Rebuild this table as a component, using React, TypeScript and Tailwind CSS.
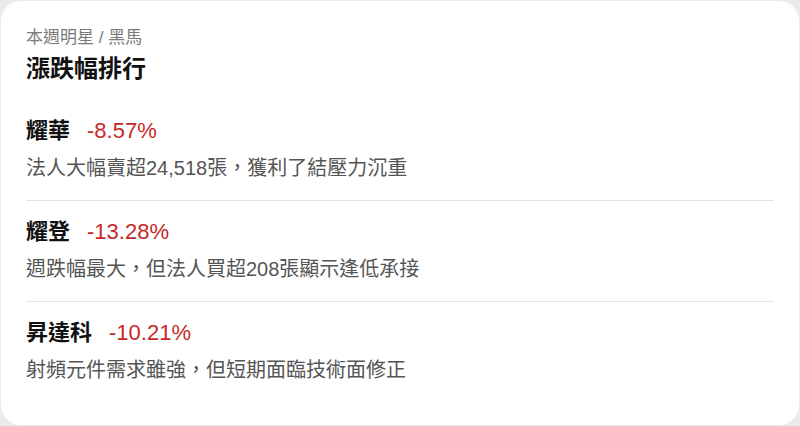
import React from "react";

const items = [
  { name: "耀華", pct: "-8.57%", desc: "法人大幅賣超24,518張，獲利了結壓力沉重" },
  { name: "耀登", pct: "-13.28%", desc: "週跌幅最大，但法人買超208張顯示逢低承接" },
  { name: "昇達科", pct: "-10.21%", desc: "射頻元件需求雖強，但短期面臨技術面修正" },
];

export default function App() {
  return (
    <div
      lang="zh-TW"
      className="w-[800px] h-[426px] bg-[#ebebeb] pt-px pl-px"
      style={{ fontFamily: '"Liberation Sans", "Noto Sans CJK TC", sans-serif' }}
    >
      <div className="w-[798px] h-[424px] bg-white rounded-[20px] px-[25px] pt-[25px] pb-[22px] flex flex-col">
        <div className="text-[17px] leading-[24px] text-[#7a7a7a]">本週明星 / 黑馬</div>
        <div className="mt-[3px] text-[24px] leading-[32px] font-bold text-[#111]">漲跌幅排行</div>
        <div className="mt-[15px] flex flex-col">
          {items.map((it, i) => (
            <div
              key={it.name}
              className={
                "pt-[16px] pb-[18px] flex flex-col gap-[8px] " +
                (i < items.length - 1 ? "border-b border-[#e4e4e4]" : "")
              }
            >
              <div className="flex items-center gap-[17px] h-[30px]">
                <span className="text-[22px] leading-[30px] font-bold text-[#111]">{it.name}</span>
                <span className="text-[22px] leading-[30px] text-[#c62828]">{it.pct}</span>
              </div>
              <div className="h-[28px] overflow-hidden text-[20px] leading-[28px] text-[#555]">{it.desc}</div>
            </div>
          ))}
        </div>
      </div>
    </div>
  );
}
